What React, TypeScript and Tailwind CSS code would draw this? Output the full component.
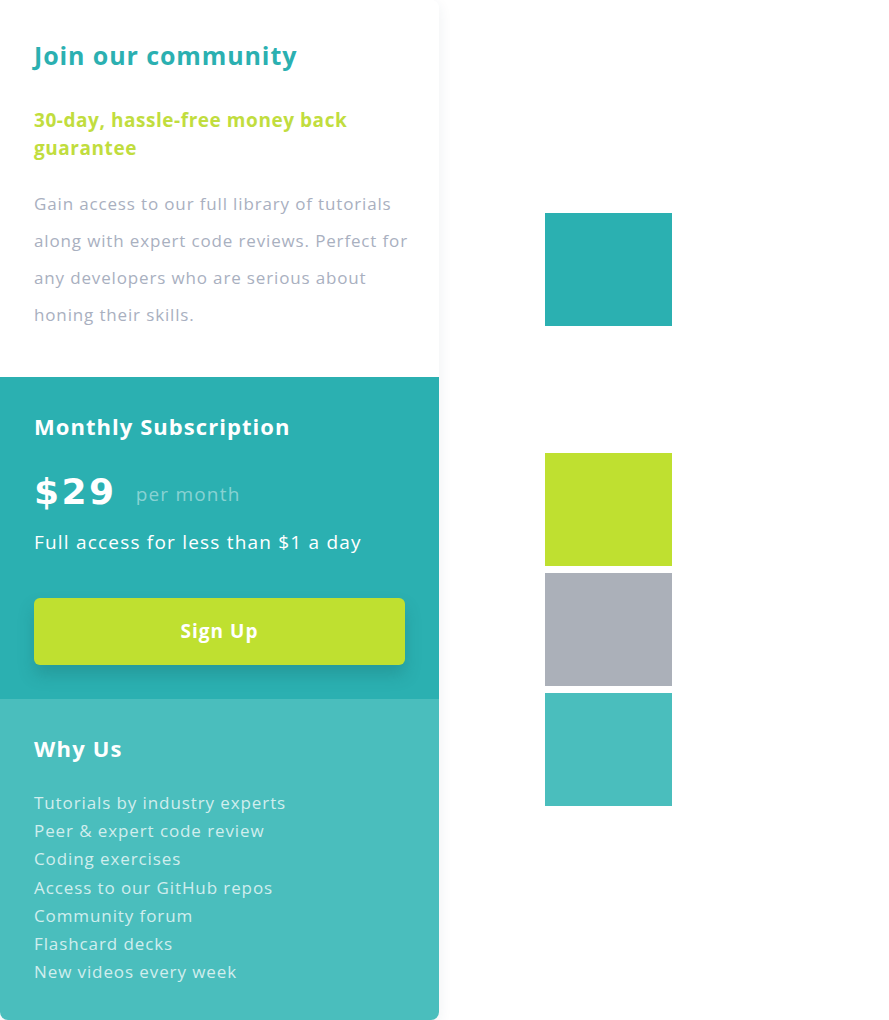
import React from 'react';

const FEATURES = [
  "Tutorials by industry experts",
  "Peer & expert code review",
  "Coding exercises",
  "Access to our GitHub repos",
  "Community forum",
  "Flashcard decks",
  "New videos every week",
];

const SWATCHES = ["#bfe030", "#abb0b9", "#4abebd"];

export default function App() {
  return (
    <div className="flex min-h-[1020px] bg-white font-['Open_Sans',sans-serif]">
      <div className="w-[439px] shrink-0 overflow-hidden rounded-r-lg rounded-bl-lg shadow-[0_4px_14px_rgba(40,60,90,0.08)]">
        <section className="h-[377px] bg-white pl-[34px] pr-[20px] pt-[38px]">
          <h1 className="text-[25px] font-bold tracking-[0.9px] text-[#2bb0b1] leading-[34px]">Join our community</h1>
          <h2 className="mt-[34px] text-[19px] font-bold leading-[28px] tracking-[0.55px] text-[#c1dd3e]">
            30-day, hassle-free money back
            <br />
            guarantee
          </h2>
          <p className="mt-[23px] whitespace-nowrap text-[17px] leading-[37px] tracking-[0.85px] text-[#a9b0bf]">
            Gain access to our full library of tutorials
            <br />
            along with expert code reviews. Perfect for
            <br />
            any developers who are serious about
            <br />
            honing their skills.
          </p>
        </section>

        <section className="h-[322px] bg-[#2bb0b1] px-[34px] pt-[33px]">
          <h3 className="text-[22px] font-bold leading-[32px] tracking-[1.05px] text-white">Monthly Subscription</h3>
          <div className="mt-[26px] flex items-center">
            <span className="font-['DejaVu_Sans',sans-serif] text-[36px] font-bold leading-[44px] tracking-[2.5px] text-white">$29</span>
            <span className="ml-[19px] mt-[4px] text-[19px] leading-[44px] tracking-[1.2px] text-white/45">per month</span>
          </div>
          <p className="mt-[11px] whitespace-nowrap text-[19px] leading-[30px] tracking-[1.2px] text-white">Full access for less than $1 a day</p>
          <button className="mt-[41px] h-[67px] w-full rounded-md bg-[#bfe030] text-[19px] font-bold tracking-[1px] text-white shadow-[0_10px_16px_rgba(20,90,90,0.25)]">
            Sign Up
          </button>
        </section>

        <section className="h-[321px] bg-[#4abebd] px-[34px] pt-[33px]">
          <h3 className="text-[22px] font-bold leading-[32px] tracking-[1.2px] text-white">Why Us</h3>
          <ul className="mt-[25px] text-[17px] leading-[28.2px] tracking-[0.9px] text-white/75">
            {FEATURES.map((f) => (
              <li key={f}>{f}</li>
            ))}
          </ul>
        </section>
      </div>

      <div className="ml-[106px] flex w-[127px] flex-col pt-[213px]">
        <div className="h-[113px] bg-[#2bb0b1]" />
        <div className="mt-[127px] flex flex-col gap-[7px]">
          {SWATCHES.map((c) => (
            <div key={c} className="h-[113px]" style={{ backgroundColor: c }} />
          ))}
        </div>
      </div>
    </div>
  );
}
